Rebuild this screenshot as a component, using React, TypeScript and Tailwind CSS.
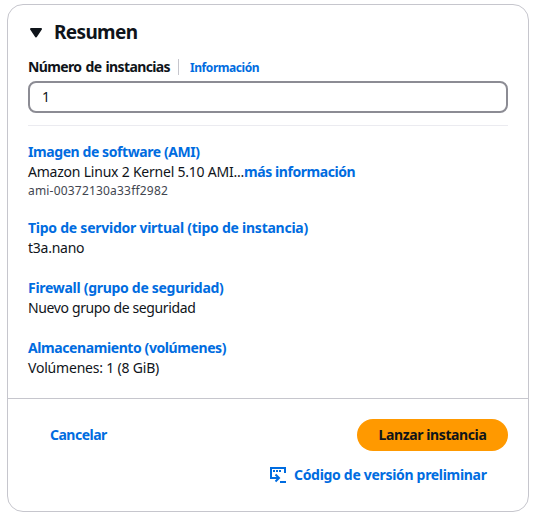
import type { ReactNode } from "react";

function Section({ title, className, children }: { title: string; className: string; children: ReactNode }) {
  return (
    <section className="whitespace-nowrap">
      <a className={`block w-fit font-bold text-[#006ce0] ${className}`}>{title}</a>
      {children}
    </section>
  );
}

export default function App() {
  return (
    <div className="h-[518px] w-[538px] bg-white pl-[7px] pt-1 font-['Noto_Sans','Open_Sans',sans-serif] text-[14px] leading-5 text-[#0f141a]">
      <div className="flex h-[508px] w-[522px] flex-col rounded-2xl border border-[#c6c6cd] bg-white">
        <div className="px-5 pt-[15px]">
          <div className="flex h-6 items-center">
            <svg width="16" height="16" viewBox="0 0 16 16" className="shrink-0">
              <path d="M3 5h10l-5 7.5z" fill="#0f141a" stroke="#0f141a" strokeWidth="2" strokeLinejoin="round" />
            </svg>
            <h2 className="ml-2.5 text-[19px] leading-6 font-bold tracking-[-0.65px]">Resumen</h2>
          </div>

          <div className="mt-[13px] flex h-5 items-center whitespace-nowrap">
            <label className="w-[142px] font-bold tracking-[-0.62px] [word-spacing:1px]">Número de instancias</label>
            <span className="ml-2 h-4 w-px bg-[#c6c6cd]" />
            <a className="ml-[11px] pt-0.5 text-[12px] font-bold tracking-[-0.43px] text-[#006ce0]">Información</a>
          </div>
          <div className="mt-1 flex h-8 items-center rounded-lg border-2 border-[#8c8c94] px-3">1</div>
          <hr className="mt-3 border-[#ebebf0]" />

          <div className="mt-4 flex flex-col gap-5">
            <Section title="Imagen de software (AMI)" className="tracking-[-0.42px]">
              <div className="flex">
                <span className="w-[216px] tracking-[-0.22px]">Amazon Linux 2 Kernel 5.10 AMI...</span>
                <a className="font-bold tracking-[-0.43px] text-[#006ce0]">más información</a>
              </div>
              <div className="h-4 w-fit pt-px text-[12px] leading-4 tracking-[0.19px] text-[#424650]">ami-00372130a33ff2982</div>
            </Section>
            <Section title="Tipo de servidor virtual (tipo de instancia)" className="tracking-[-0.25px]">
              <div className="w-fit tracking-[-0.25px]">t3a.nano</div>
            </Section>
            <Section title="Firewall (grupo de seguridad)" className="tracking-[-0.29px]">
              <div className="w-fit tracking-[-0.37px]">Nuevo grupo de seguridad</div>
            </Section>
            <Section title="Almacenamiento (volúmenes)" className="tracking-[-0.41px]">
              <div className="w-fit tracking-[-0.2px]">Volúmenes: 1 (8 GiB)</div>
            </Section>
          </div>
        </div>

        <footer className="mt-5 flex flex-1 flex-col border-t border-[#c6c6cd] px-5 pt-5 font-bold whitespace-nowrap">
          <div className="flex h-8 items-center justify-between">
            <button className="ml-[22px] tracking-[-0.5px] text-[#006ce0]">Cancelar</button>
            <button className="h-8 w-[151px] rounded-full bg-[#ff9900] tracking-[-0.4px]">Lanzar instancia</button>
          </div>
          <button className="mt-2 ml-[242px] flex h-8 items-center text-[#006ce0]">
            <svg width="16" height="16" viewBox="0 0 16 16" className="shrink-0" fill="none" stroke="currentColor" strokeWidth="2">
              <path d="M15 6V1H1v10h8" />
              <path d="M5.5 7.5 9 11 5.5 14.5M10 15h6" />
              <path d="M3 4h2M6 4h2M9 4h2" />
            </svg>
            <span className="ml-2 tracking-[-0.31px]">Código de versión preliminar</span>
          </button>
        </footer>
      </div>
    </div>
  );
}
